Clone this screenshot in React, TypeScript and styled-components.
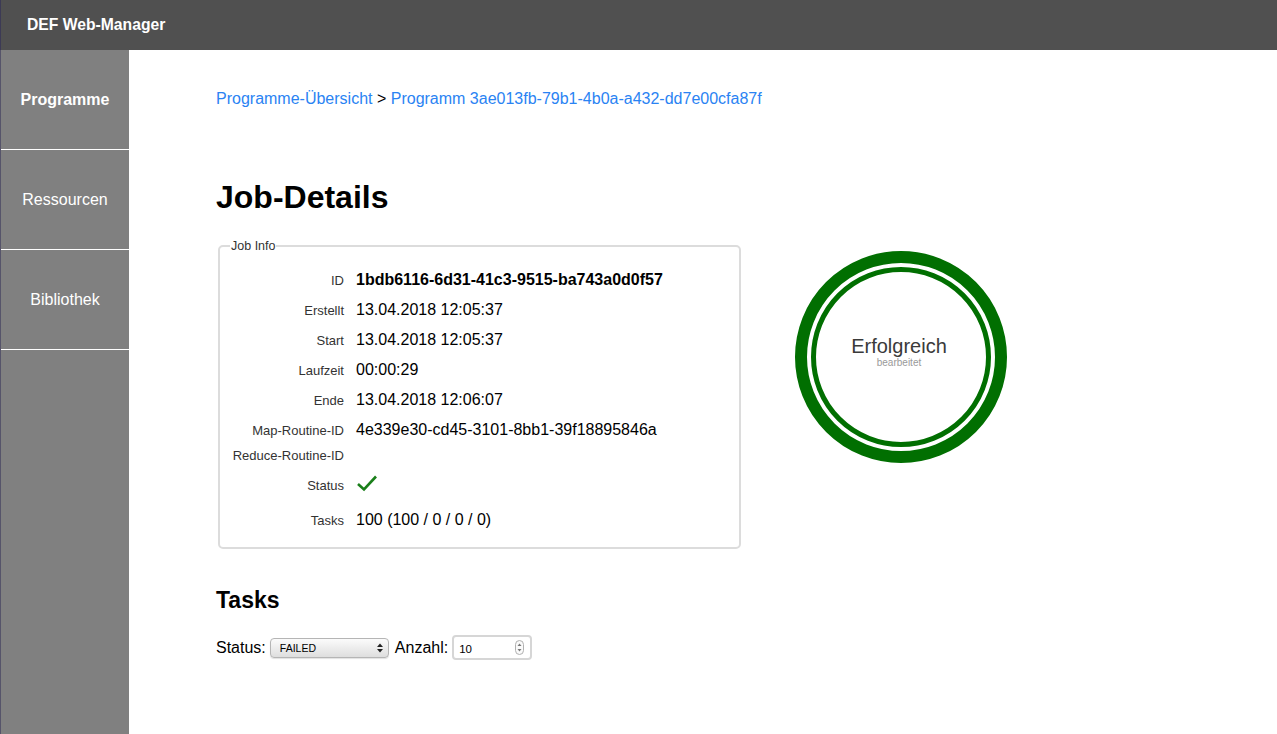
import React from "react";
import styled, { createGlobalStyle } from "styled-components";

const GlobalStyle = createGlobalStyle`
  html, body { margin: 0; padding: 0; background: #ffffff; }
  body { font-family: "Liberation Sans", Arial, Helvetica, sans-serif; color: #000; }
  * { box-sizing: border-box; }
`;

const Page = styled.div`
  display: flex;
  flex-direction: column;
  min-height: 100vh;
`;

const Header = styled.header`
  height: 50px;
  background: #505050;
  display: flex;
  align-items: center;
  padding-left: 26px;
  border-left: 1px solid #3c3a55;
`;

const Brand = styled.div`
  color: #ffffff;
  font-weight: bold;
  font-size: 15.7px;
  margin-top: -1px;
`;

const Body = styled.div`
  flex: 1;
  display: flex;
`;

const Sidebar = styled.nav`
  width: 129px;
  background: #808080;
  display: flex;
  flex-direction: column;
  border-left: 1px solid #56546a;
`;

const NavItem = styled.div<{ $active?: boolean }>`
  height: 100px;
  display: flex;
  align-items: center;
  justify-content: center;
  color: #ffffff;
  font-size: 16px;
  font-weight: ${(p) => (p.$active ? "bold" : "normal")};
  border-bottom: 1px solid #ffffff;
`;

const Main = styled.main`
  flex: 1;
  padding: 40px 0 0 87px;
`;

const Breadcrumb = styled.div`
  font-size: 16px;
  color: #000;
  line-height: 18px;
`;

const Crumb = styled.a`
  color: #2a83f3;
  text-decoration: none;
`;

const Title = styled.h1`
  font-size: 32px;
  font-weight: bold;
  margin: 71px 0 0 0;
  line-height: 36px;
`;

const DetailRow = styled.div`
  display: flex;
  align-items: flex-start;
  gap: 54px;
  margin-top: 24px;
`;

const InfoSet = styled.fieldset`
  width: 523px;
  margin: 0 0 0 2px;
  padding: 12px 0 12px 0;
  border: 2px solid #dcdcdc;
  border-radius: 5px;
`;

const Legend = styled.legend`
  font-size: 12.5px;
  color: #333;
  margin-left: 10px;
  padding: 0 1px;
`;

const InfoRow = styled.div<{ $h?: number }>`
  display: grid;
  grid-template-columns: 124px 1fr;
  column-gap: 12px;
  align-items: center;
  height: ${(p) => p.$h ?? 30}px;
`;

const Label = styled.div`
  text-align: right;
  font-size: 13px;
  color: #333;
`;

const Value = styled.div<{ $bold?: boolean }>`
  font-size: 16px;
  color: #000;
  font-weight: ${(p) => (p.$bold ? "bold" : "normal")};
`;

const StatusRing = styled.div`
  margin-top: 12px;
  width: 212px;
  height: 212px;
  border-radius: 50%;
  border: 12px solid #016f01;
  padding: 4px;
  flex-shrink: 0;
`;

const InnerRing = styled.div`
  width: 100%;
  height: 100%;
  border-radius: 50%;
  border: 5px solid #016f01;
  display: flex;
  flex-direction: column;
  align-items: center;
  justify-content: center;
  padding-bottom: 12px;
  padding-right: 4px;
`;

const RingTitle = styled.div`
  font-size: 20px;
  color: #3a3a3a;
  line-height: 22px;
`;

const RingSub = styled.div`
  font-size: 10px;
  color: #9a9a9a;
  line-height: 11px;
`;

const SubTitle = styled.h2`
  font-size: 23px;
  font-weight: bold;
  margin: 38px 0 0 0;
  line-height: 26px;
`;

const Controls = styled.div`
  display: flex;
  align-items: center;
  margin-top: 22px;
  font-size: 16px;
  gap: 4px;
`;

const SelectWrap = styled.div`
  position: relative;
  width: 119px;
  height: 20px;
  margin-right: 2px;
`;

const Select = styled.select`
  appearance: none;
  width: 100%;
  height: 100%;
  border: 1px solid #b5b5b5;
  border-radius: 4px;
  background: linear-gradient(#fbfbfb, #dedede);
  font-family: "Liberation Sans", Arial, sans-serif;
  font-size: 10.5px;
  padding: 1px 0 0 9px;
  color: #000;
  box-shadow: 0 1px 1px rgba(0, 0, 0, 0.12);
`;

const SelectArrows = styled.svg`
  position: absolute;
  right: 6px;
  top: 5px;
  pointer-events: none;
`;

const NumberWrap = styled.div`
  position: relative;
  width: 80px;
  height: 25px;
`;

const NumberInput = styled.input`
  width: 100%;
  height: 100%;
  border: 2px solid #d6d6d6;
  border-radius: 4px;
  font-family: "Liberation Sans", Arial, sans-serif;
  font-size: 11.5px;
  padding: 3px 0 0 5px;
  appearance: textfield;
  &::-webkit-inner-spin-button,
  &::-webkit-outer-spin-button { -webkit-appearance: none; margin: 0; }
`;

const Spinner = styled.svg`
  position: absolute;
  right: 8px;
  top: 5px;
  pointer-events: none;
`;

const Check = () => (
  <svg width="22" height="18" viewBox="0 0 22 18">
    <polyline points="2,10 8,15.5 20,2.5" fill="none" stroke="#1a7f1a" strokeWidth="2.6" />
  </svg>
);

const rows: { label: string; value?: React.ReactNode; bold?: boolean; h?: number }[] = [
  { label: "ID", value: "1bdb6116-6d31-41c3-9515-ba743a0d0f57", bold: true },
  { label: "Erstellt", value: "13.04.2018 12:05:37" },
  { label: "Start", value: "13.04.2018 12:05:37" },
  { label: "Laufzeit", value: "00:00:29" },
  { label: "Ende", value: "13.04.2018 12:06:07" },
  { label: "Map-Routine-ID", value: "4e339e30-cd45-3101-8bb1-39f18895846a" },
  { label: "Reduce-Routine-ID", value: "", h: 20 },
  { label: "Status", value: <Check />, h: 40 },
  { label: "Tasks", value: "100 (100 / 0 / 0 / 0)" },
];

export default function App() {
  return (
    <>
      <GlobalStyle />
      <Page>
        <Header>
          <Brand>DEF Web-Manager</Brand>
        </Header>
        <Body>
          <Sidebar>
            <NavItem $active>Programme</NavItem>
            <NavItem>Ressourcen</NavItem>
            <NavItem>Bibliothek</NavItem>
          </Sidebar>
          <Main>
            <Breadcrumb>
              <Crumb href="#">Programme-Übersicht</Crumb> &gt;{" "}
              <Crumb href="#">Programm 3ae013fb-79b1-4b0a-a432-dd7e00cfa87f</Crumb>
            </Breadcrumb>
            <Title>Job-Details</Title>
            <DetailRow>
              <InfoSet>
                <Legend>Job Info</Legend>
                {rows.map((r) => (
                  <InfoRow key={r.label} $h={r.h}>
                    <Label>{r.label}</Label>
                    <Value $bold={r.bold}>{r.value}</Value>
                  </InfoRow>
                ))}
              </InfoSet>
              <StatusRing>
                <InnerRing>
                  <RingTitle>Erfolgreich</RingTitle>
                  <RingSub>bearbeitet</RingSub>
                </InnerRing>
              </StatusRing>
            </DetailRow>
            <SubTitle>Tasks</SubTitle>
            <Controls>
              <span>Status:</span>
              <SelectWrap>
                <Select defaultValue="FAILED">
                  <option value="FAILED">FAILED</option>
                  <option value="SUCCESS">SUCCESS</option>
                </Select>
                <SelectArrows width="6" height="10" viewBox="0 0 6 10">
                  <polygon points="0,4 6,4 3,0.5" fill="#222" />
                  <polygon points="0,6 6,6 3,9.5" fill="#222" />
                </SelectArrows>
              </SelectWrap>
              <span>Anzahl:</span>
              <NumberWrap>
                <NumberInput type="number" defaultValue={10} />
                <Spinner width="9" height="15" viewBox="0 0 9 15">
                  <rect x="0.5" y="0.5" width="8" height="14" rx="4" fill="#fafafa" stroke="#b0b0b0" />
                  <polygon points="2.5,6 6.5,6 4.5,3.5" fill="#777" />
                  <polygon points="2.5,9 6.5,9 4.5,11.5" fill="#777" />
                </Spinner>
              </NumberWrap>
            </Controls>
          </Main>
        </Body>
      </Page>
    </>
  );
}
